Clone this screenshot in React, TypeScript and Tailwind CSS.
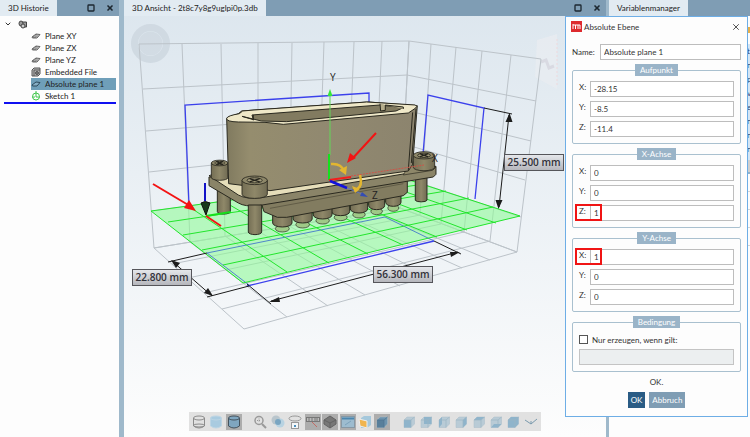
import type { ReactNode } from 'react'
import { ChevronDown, Square, X } from 'lucide-react'

type P = [number, number]

/* ---------- geometry of the 3D scene ---------- */

const wallTop: P[] = [[139, 41], [182, 41], [221, 41], [258, 40], [292, 40], [324, 39], [354, 39], [382, 38], [409, 38]]
const floorBack: P[] = [[154, 245], [190, 239], [225, 233], [258, 228], [289, 223], [318, 218], [347, 213], [374, 209], [400, 205]]
const floorFront: P[] = [[244, 326], [287, 314], [328, 303], [365, 292], [400, 283], [432, 274], [462, 265], [490, 257], [517, 249]]
const floorLeft: P[] = [[154, 245], [172, 261], [188, 275], [204, 290], [222, 306], [244, 326]]
const floorRight: P[] = [[400, 205], [420, 212], [441, 221], [464, 229], [490, 238], [517, 249]]
const sideTop: P[] = [[409, 38], [431, 41], [456, 44], [482, 48], [511, 52], [541, 56]]
const rowsLeft: P[] = [[139, 41], [143, 86], [146, 128], [149, 169], [152, 208], [154, 245]]
const rowsCorner: P[] = [[409, 38], [407, 72], [405, 107], [404, 141], [402, 174], [400, 205]]
const rowsSide: P[] = [[541, 56], [536, 98], [531, 138], [525, 177], [521, 214], [517, 249]]

const planeBack: P[] = [[151, 208], [188, 203], [223, 198], [256, 194], [288, 189], [317, 185], [346, 181], [374, 178], [400, 174]]
const planeFront: P[] = [[243, 280], [287, 269], [329, 260], [368, 251], [403, 242], [437, 234], [467, 227], [496, 220], [520, 213]]
const planeLeft: P[] = [[151, 208], [168, 219], [183, 232], [202, 247], [223, 262], [243, 280]]
const planeRight: P[] = [[400, 174], [424, 181], [446, 188], [469, 195], [493, 204], [520, 213]]

const pins: [number, number, number][] = [
  [610, 366, 46], [560, 376, 48], [507, 386, 52], [452, 394, 54], [398, 404, 56], [338, 416, 57], [277, 428, 58],
]

function Lines({ from, to }: { from: P[]; to: P[] }) {
  return (
    <>
      {from.map((a, i) => (
        <line key={i} x1={a[0]} y1={a[1]} x2={to[i][0]} y2={to[i][1]} />
      ))}
    </>
  )
}

function Screw({ x, y, w, h }: { x: number; y: number; w: number; h: number }) {
  const r = w / 2
  return (
    <g transform={`translate(${x} ${y})`} stroke="#26251d" strokeWidth="2.5">
      <path d={`M0 0V${h}A${r} ${r * 0.32} 0 0 0 ${w} ${h}V0`} fill="url(#metal)" />
      <ellipse cx={r} cy="0" rx={r} ry={r * 0.34} fill="#8d8769" />
      <ellipse cx={r} cy="0" rx={r * 0.6} ry={r * 0.2} fill="#a39c7c" />
      <path d={`M${r * 0.6} -5L${r * 1.4} 5M${r * 1.4} -5L${r * 0.6} 5`} strokeWidth="4" />
    </g>
  )
}

function DimensionLabel({ x, y, text }: { x: number; y: number; text: string }) {
  return (
    <g>
      <rect x={x + 0.5} y={y + 0.5} width="59" height="16" fill="url(#label)" stroke="#55555a" />
      <text x={x + 30} y={y + 12} textAnchor="middle" fontSize="10" fontWeight="600" fill="#303038">
        {text}
      </text>
    </g>
  )
}

function Scene() {
  return (
    <svg
      viewBox="124 16 482 390"
      className="min-h-0 w-full flex-1 font-['Open_Sans','Noto_Sans',sans-serif]"
      role="img"
      aria-label="3D Ansicht"
    >
      <defs>
        <linearGradient id="metal" x1="0" x2="1" y1="0" y2="0">
          <stop offset="0" stopColor="#746e54" />
          <stop offset="0.5" stopColor="#8f8869" />
          <stop offset="1" stopColor="#706b53" />
        </linearGradient>
        <linearGradient id="shell" x1="0" x2="1" y1="0" y2="0">
          <stop offset="0" stopColor="#807a5f" />
          <stop offset="0.12" stopColor="#958d6e" />
          <stop offset="0.5" stopColor="#918970" />
          <stop offset="1" stopColor="#8c846e" />
        </linearGradient>
        <linearGradient id="label" x1="0" x2="0" y1="0" y2="1">
          <stop offset="0" stopColor="#e6e8ec" />
          <stop offset="1" stopColor="#b4b5bb" />
        </linearGradient>
      </defs>

      {/* orientation dial and view cube */}
      <circle cx="150.500" cy="40.500" r="16" fill="none" stroke="#ccd6df" strokeWidth="7" opacity="0.8" />
      <circle cx="150.500" cy="40.500" r="12" fill="#ccd6de" opacity="0.7" />
      <path d="M537 37L557 31V86L535 74Z" fill="#e9edf1" opacity="0.7" />
      <path d="M541 59l5-2 3 8 5-2" fill="none" stroke="#d9dae2" strokeWidth="3" />
      <path d="M557 36v46" stroke="#eed9dc" strokeDasharray="2 2" />

      {/* reference grid */}
      <g stroke="#bcc3c9" fill="none" strokeWidth="1">
        <Lines from={wallTop} to={floorBack} />
        <Lines from={rowsLeft} to={rowsCorner} />
        <Lines from={rowsCorner} to={rowsSide} />
        <Lines from={sideTop} to={floorRight} />
        <Lines from={floorBack} to={floorFront} />
        <Lines from={floorLeft} to={floorRight} />
      </g>

      <path d="M189 202L185 102L369 90V100M423 151L428 92L484 105L475 196" fill="none" stroke="#3b41ec" strokeWidth="1.300" />

      {/* work plane */}
      <path d="M151 208L400 174L520 213L243 280Z" fill="#8dfb96" fillOpacity="0.58" />
      <path d="M249 282L207 250L385 214L434 238" fill="none" stroke="#4f86c9" />
      <g stroke="#22e52c" strokeWidth="1">
        <Lines from={planeBack} to={planeFront} />
        <Lines from={planeLeft} to={planeRight} />
      </g>
      <path d="M247 283L434 238" stroke="#3b41ec" strokeWidth="1.300" />

      {/* dimensions */}
      <g stroke="#1c1c1c" fill="#1c1c1c">
        <path d="M168 259L207 250M207 294L249 283M247 281L271 301M434 238L461 251M484 105L512 111" />
        <path d="M172 258L212 293M271 298L458 249M509 112L499 204" />
        <path
          stroke="none"
          d="M171 257l9 3-4 5zM213 293l-9-3 4-5zM269 299l10-5 1 5zM460 249l-10 0 1 5zM509.500 110l-4 9 7 0zM498.500 206l-3-9 7 0z"
        />
      </g>

      {/* connector */}
      <g transform="translate(190 80) scale(0.3333)" stroke="#2a291f" strokeWidth="3" strokeLinejoin="round">
        <path d="M82 310V386A19 7 0 0 0 121 386V320Z" fill="url(#metal)" />
        <path d="M676 270V352A18 6 0 0 0 711 352V270Z" fill="url(#metal)" />
        {pins.map(([x, y, w]) => (
          <g key={x}>
            <ellipse cx={x} cy={y + 9} rx={w * 0.36} ry="10" fill="#9fc987" strokeWidth="2" />
            <path
              d={`M${x - w / 2} ${y - 50}V${y - 8}A${w / 2} 12 0 0 0 ${x + w / 2} ${y - 8}V${y - 50}Z`}
              fill="url(#metal)"
            />
          </g>
        ))}
        <path d="M214 360L222 386L262 403L290 403L640 338L652 328V280Z" fill="#827c60" />
        <path d="M240 376L640 302" stroke="#504c39" strokeWidth="2" />
        <path d="M57 282V308L145 360Q165 372 205 368L730 282L738 274V250Z" fill="#8a8468" />
        <path d="M57 278L112 262L690 236L738 252L730 258L215 344Q170 350 145 336Z" fill="#e6deba" />
        <path d="M675 240L738 252L728 262L640 276L660 240Z" fill="#8e8769" strokeWidth="2" />
        <path d="M175 366V447A20 8 0 0 0 215 447V366Z" fill="url(#metal)" />
        <Screw x={64} y={240} w={50} h={44} />
        <path
          d="M110 106L145 92L155 84L535 57L682 68L668 244L655 264L420 297L240 323L165 308L116 302Z"
          fill="url(#shell)"
        />
        <path d="M110 106Q112 98 148 92L158 84L192 81L530 57L676 66Q684 70 676 76L655 90L280 124L225 118L145 117Q108 116 110 106Z" fill="#efe8c8" />
        <path d="M156 100L190 110L186 96L570 66L640 74L618 84L290 116L214 114Z" fill="#827b60" />
        <path d="M570 62L572 84L586 82V66L640 72V78" fill="#b5ad8b" />
        <path d="M190 96V112M668 88L655 262M678 78L664 240" fill="none" />
        <Screw x={156} y={292} w={76} h={42} />
        <Screw x={670} y={217} w={64} h={36} />
      </g>

      {/* axes and arrows */}
      <g fill="none">
        <path d="M330 152V92" stroke="#62d659" />
        <path d="M330 86l-2.500 7h5z" fill="#35e53b" />
        <path d="M329 177V151" stroke="#14e21c" strokeWidth="2" />
        <path d="M329 177L351 174" stroke="#f51c1c" strokeWidth="2" />
        <path d="M351 173L424 162" stroke="#cf5347" strokeDasharray="2 1" />
        <path d="M330 178L347 185" stroke="#1212dc" strokeWidth="2.500" />
        <path d="M347 185L362 191" stroke="#6075bd" />
        <path d="M368 194l-6-5-2 4z" fill="#344cb4" />
        <path d="M331 161q10-1 13 7M360 172q3 11-3 14" stroke="#e3b62f" strokeWidth="2.500" />
        <path d="M339 167l8-4-1 9zM352 183l8 3-5 4z" fill="#e3b62f" />
        <path d="M376 130L352 156M153 181L190 203" stroke="#f31313" strokeWidth="2" />
        <path d="M347 160l3-10 6 5zM196 208l-12-3 5-8z" fill="#f31313" />
        <path d="M205 180V198" stroke="#1212c8" strokeWidth="2" />
        <path d="M201 200q4-3 9 0l-4 12z" fill="#16391a" stroke="#111" />
        <path d="M206 213L231 209" stroke="#14df1c" strokeWidth="2" />
        <path d="M206 213L221 223" stroke="#f31313" strokeWidth="2" />
      </g>
      <g fontSize="10" fill="#222">
        <text x="330" y="78">Y</text>
        <text x="432" y="159">X</text>
        <text x="372" y="196">Z</text>
      </g>

      <DimensionLabel x={132} y={266} text="22.800 mm" />
      <DimensionLabel x={373} y={263} text="56.300 mm" />
      <DimensionLabel x={504} y={151} text="25.500 mm" />
    </svg>
  )
}

/* ---------- panel headers ---------- */

function PanelHeader({ title, controls }: { title: string; controls?: boolean }) {
  return (
    <header className="flex h-4 shrink-0 items-center justify-between bg-[#7f9db4]">
      <h2 className="flex h-4 items-center bg-[#e2ebf2] px-2 whitespace-nowrap">{title}</h2>
      {controls && (
        <div className="flex items-center gap-[11px] pr-[5px] text-[#1d2730]">
          <button type="button" aria-label="Maximieren">
            <Square className="size-2" strokeWidth={4} />
          </button>
          <button type="button" aria-label="Schließen">
            <X className="size-2" strokeWidth={5} />
          </button>
        </div>
      )}
    </header>
  )
}

/* ---------- history tree ---------- */

function PlaneIcon({ hollow }: { hollow?: boolean }) {
  return (
    <svg viewBox="0 0 10 8" className="h-2 w-[10px]">
      <path d="M1 5L5 2L9 2.500L6 6L1.500 6Z" fill={hollow ? '#86aec4' : '#888'} stroke={hollow ? '#2c4a5c' : '#666'} />
      {!hollow && <path d="M3 4.500L7 3M5 5.500L8 3" stroke="#ddd" strokeWidth="0.500" />}
    </svg>
  )
}

function FileIcon() {
  return (
    <svg viewBox="0 0 10 10" className="size-[10px]" fill="none" stroke="#555">
      <path d="M1 3L3 1H9V7L7 9H1Z" fill="#bbb" />
      <path d="M3 3H9M3 3V9" />
      <circle cx="6" cy="6" r="1.500" fill="#777" />
    </svg>
  )
}

function SketchIcon() {
  return (
    <svg viewBox="0 0 10 10" className="size-[10px]" fill="none" stroke="#3fc64a">
      <circle cx="5" cy="5.500" r="3.500" />
      <path d="M5 0V6H9M1 6H4" />
    </svg>
  )
}

const treeItems: { label: string; icon: ReactNode; selected?: boolean }[] = [
  { label: 'Plane XY', icon: <PlaneIcon /> },
  { label: 'Plane ZX', icon: <PlaneIcon /> },
  { label: 'Plane YZ', icon: <PlaneIcon /> },
  { label: 'Embedded File', icon: <FileIcon /> },
  { label: 'Absolute plane 1', icon: <PlaneIcon hollow />, selected: true },
  { label: 'Sketch 1', icon: <SketchIcon /> },
]

function HistoryTree() {
  return (
    <div className="pt-[2px] pr-[3px] pl-1">
      <button type="button" className="flex h-3 items-center gap-[6px]" aria-label="Baugruppe" aria-expanded="true">
        <ChevronDown className="size-2 text-[#333]" strokeWidth={3} />
        <svg viewBox="0 0 10 9" className="h-[9px] w-[10px]" fill="#999" stroke="#444">
          <path d="M4 2H8.500V7H4Z" />
          <ellipse cx="3" cy="3.500" rx="2" ry="2.500" />
          <ellipse cx="5" cy="6" rx="2" ry="2" fill="#ccc" />
        </svg>
      </button>
      <ul className="pl-[27px]">
        {treeItems.map((item) => (
          <li
            key={item.label}
            className={item.selected ? 'flex h-3 items-center gap-1 bg-[#6f9fb9]' : 'flex h-3 items-center gap-1'}
          >
            {item.icon}
            <span>{item.label}</span>
          </li>
        ))}
      </ul>
      <hr className="h-[2px] border-0 bg-[#1010f0]" />
    </div>
  )
}

/* ---------- view toolbar ---------- */

function Cylinder({ fill, stroke }: { fill: string; stroke: string }) {
  return (
    <svg viewBox="0 0 14 14" className="size-[14px]" fill={fill} stroke={stroke}>
      <path d="M1.500 3V11Q7 15 12.500 11V3" />
      <ellipse cx="7" cy="3" rx="5.500" ry="2" />
      {fill === 'none' && <ellipse cx="7" cy="10.500" rx="5.500" ry="1.500" />}
    </svg>
  )
}

function Cube({ face, dark }: { face: string; dark?: boolean }) {
  return (
    <svg viewBox="0 0 12 12" className="size-3">
      <path d="M1 4L4 1H11.500V8L8 11.500H1Z" fill={dark ? '#6c93ae' : '#b9cbd6'} stroke="#a9bcc8" strokeWidth="0.500" />
      <path d={face} fill={dark ? '#587f9b' : '#8fb4cb'} />
      <path d="M1 4H8L11.500 1M8 4V11.500" fill="none" stroke={dark ? '#4d748f' : '#9cb4c3'} strokeWidth="0.700" />
    </svg>
  )
}

const tools: { name: string; icon: ReactNode; active?: boolean; gap?: boolean }[] = [
  { name: 'Drahtmodell', icon: <Cylinder fill="none" stroke="#8b8b8b" /> },
  { name: 'Schattiert', icon: <Cylinder fill="#a9cbe0" stroke="#bdd5e4" /> },
  { name: 'Schattiert mit Kanten', icon: <Cylinder fill="#7fa6c0" stroke="#45535e" />, active: true },
  {
    name: 'Zoom',
    gap: true,
    icon: (
      <svg viewBox="0 0 14 14" className="size-[14px]" fill="none" stroke="#999">
        <circle cx="6" cy="5.500" r="4" strokeWidth="1.500" />
        <path d="M4 5.500H8M6 3.500V7.500" strokeDasharray="1 1" />
        <path d="M9 9L13 13" strokeWidth="2" />
      </svg>
    ),
  },
  {
    name: 'Transparenz',
    icon: (
      <svg viewBox="0 0 14 14" className="size-[14px]">
        <circle cx="5" cy="5" r="4.500" fill="#b9c5cc" />
        <circle cx="9" cy="8" r="4.500" fill="#b8d3e2" />
        <circle cx="7" cy="7" r="3" fill="#7aa5c1" />
      </svg>
    ),
  },
  {
    name: 'Drehen',
    icon: (
      <svg viewBox="0 0 14 14" className="size-[14px]" fill="none" stroke="#999">
        <ellipse cx="7" cy="3.500" rx="6" ry="2.500" />
        <rect x="3.500" y="7.500" width="7" height="6" fill="#f4f7f9" />
        <path d="M6 10H8V12H6Z" fill="#4c8fbc" stroke="none" />
      </svg>
    ),
  },
  {
    name: 'Bemaßung',
    active: true,
    icon: (
      <svg viewBox="0 0 14 14" className="size-[14px]" fill="none" stroke="#777">
        <rect x="0.500" y="2.500" width="13" height="4" fill="#bbb" />
        <path d="M3 3V6M6 3V6M9 3V6M11 3V6" />
        <path d="M6 7L11 12" stroke="#c26b64" />
      </svg>
    ),
  },
  {
    name: 'Raster',
    active: true,
    icon: (
      <svg viewBox="0 0 14 14" className="size-[14px]" fill="#777" stroke="#626262">
        <path d="M1 5L7 1L13 5V9L7 13L1 9Z" />
        <path d="M1 5L7 8L13 5M7 8V13" fill="none" />
      </svg>
    ),
  },
  {
    name: 'Fenster',
    active: true,
    icon: (
      <svg viewBox="0 0 14 14" className="size-[14px]">
        <rect x="0.500" y="1.500" width="13" height="11" fill="#9dbccf" stroke="#8798a4" />
        <path d="M1 3.500H13" stroke="#4b86ae" strokeWidth="2" />
        <path d="M4 10L10 6" stroke="#7ca2bb" />
      </svg>
    ),
  },
  {
    name: 'Schnitt',
    icon: (
      <svg viewBox="0 0 14 14" className="size-[14px]">
        <path d="M3 3L6 1H13V10L9 13H3Z" fill="#a5c8dc" />
        <path d="M1 4L9 6V13L2 11Z" fill="#f0b550" stroke="#eee" />
      </svg>
    ),
  },
  { name: 'Perspektive', icon: <Cube face="M1 4H8V11.500H1Z" dark />, active: true },
  { name: 'Vorne', icon: <Cube face="M1 4H8V11.500H1Z" />, gap: true },
  { name: 'Hinten', icon: <Cube face="M4 1H11.500V8H4Z" /> },
  { name: 'Links', icon: <Cube face="M1 4L4 1V8L1 11.500Z" /> },
  { name: 'Rechts', icon: <Cube face="M8 4L11.500 1V8L8 11.500Z" /> },
  { name: 'Oben', icon: <Cube face="M1 4L4 1H11.500L8 4Z" /> },
  { name: 'Unten', icon: <Cube face="M1 11.500L4 8H11.500L8 11.500Z" /> },
  { name: 'Isometrisch', icon: <Cube face="M1 4L4 1H11.500V8L8 11.500H1Z" /> },
  {
    name: 'Weitere',
    icon: (
      <svg viewBox="0 0 14 14" className="size-[14px]" fill="none" stroke="#7a9aad">
        <path d="M1 5L7 9L13 4M7 9V6" />
      </svg>
    ),
  },
]

function Toolbar() {
  return (
    <div
      role="toolbar"
      aria-label="Ansicht"
      className="mb-[6px] flex h-[19px] w-[352px] items-center justify-between self-center bg-[#e1e1e1] px-[2px]"
    >
      {tools.map((tool) => (
        <div key={tool.name} className={tool.gap ? 'pl-[9px]' : ''}>
          <button
            type="button"
            aria-label={tool.name}
            className={
              tool.active
                ? 'flex size-4 items-center justify-center bg-[#adadad]'
                : 'flex size-4 items-center justify-center'
            }
          >
            {tool.icon}
          </button>
        </div>
      ))}
    </div>
  )
}

/* ---------- variable manager ---------- */

const variables = ['t', 'n', 'p', 'v', 'e', 'n', 'n', 'n']

function VariableManager() {
  return (
    <div className="flex w-[3px] flex-col self-end overflow-hidden pt-[11px]">
      <span className="h-[6px] bg-[#e8b04a]" />
      <ul className="mt-[11px] bg-[#d3e5f5] pb-1 text-[#27406b]">
        {variables.map((name, i) => (
          <li key={i} className="h-[14px] leading-[14px]">
            {name}
          </li>
        ))}
      </ul>
      <span className="h-[14px] border-b-2 border-[#8fb2cb] bg-[#cfcfcf]" />
      {[0, 1, 2, 3].map((row) => (
        <span key={row} className="h-[18px] border-b border-[#d5d5d5]" />
      ))}
    </div>
  )
}

/* ---------- dialog ---------- */

function Group({ title, children }: { title: string; children: ReactNode }) {
  return (
    <fieldset className="rounded-xs border border-[#a9c0cf] px-[6px] pt-[5px] pb-[6px]">
      <legend className="mx-auto h-3 bg-[#9ab4c8] px-[5px] leading-3 text-white">{title}</legend>
      {children}
    </fieldset>
  )
}

function Vector({ id, title, values, marked }: { id: string; title: string; values: string[]; marked?: number }) {
  return (
    <Group title={title}>
      <div className="flex flex-col gap-1">
        {['X:', 'Y:', 'Z:'].map((axis, i) => (
          <div key={axis} className="relative flex h-4">
            <label htmlFor={id + i} className="w-[11px] leading-[13px]">
              {axis}
            </label>
            <input id={id + i} defaultValue={values[i]} className="min-w-0 flex-1 border border-[#bdbdbd] bg-white px-[3px]" />
            {marked === i && <span className="absolute -top-px -left-1 h-[17px] w-[27px] border-2 border-[#f01414]" />}
          </div>
        ))}
      </div>
    </Group>
  )
}

function PlaneDialog() {
  return (
    <form
      role="dialog"
      aria-label="Absolute Ebene"
      className="absolute top-4 right-[2px] w-[183px] border border-[#6eaee6] bg-[#fdfdfd] px-[6px] pb-2 text-[#333]"
    >
      <div className="flex h-[19px] items-center gap-[2px]">
        <svg viewBox="0 0 11 11" className="-ml-px size-[11px]">
          <rect width="11" height="11" fill="#dd2a2e" />
          <path d="M2 8V3M2 4H9V8M4.500 4V8M7 4V8" stroke="#fff" fill="none" />
        </svg>
        <h3 className="flex-1">Absolute Ebene</h3>
        <button type="button" aria-label="Schließen">
          <X className="size-[10px]" strokeWidth={2} />
        </button>
      </div>
      <div className="mt-2 flex h-4 items-center">
        <label htmlFor="plane-name" className="w-7">
          Name:
        </label>
        <input
          id="plane-name"
          defaultValue="Absolute plane 1"
          className="h-4 min-w-0 flex-1 border border-[#bdbdbd] bg-white px-[3px]"
        />
      </div>
      <div className="mt-1 flex flex-col gap-1">
        <Vector id="origin" title="Aufpunkt" values={['-28.15', '-8.5', '-11.4']} />
        <Vector id="x-axis" title="X-Achse" values={['0', '0', '1']} marked={2} />
        <Vector id="y-axis" title="Y-Achse" values={['1', '0', '0']} marked={0} />
        <Group title="Bedingung">
          <label className="flex h-[13px] items-center gap-1">
            <input type="checkbox" className="size-[9px] appearance-none border border-[#555] bg-white" />
            Nur erzeugen, wenn gilt:
          </label>
          <input
            disabled
            aria-label="Bedingung"
            className="mt-[3px] block h-4 w-full border border-[#c4c4c4] bg-[#eceff0]"
          />
        </Group>
      </div>
      <output className="mt-1 block text-center leading-3">OK.</output>
      <div className="mt-1 flex justify-center gap-1 text-white">
        <button type="submit" className="h-4 bg-[#2a5c85] px-[3px]">
          OK
        </button>
        <button type="button" className="h-4 bg-[#7f9db4] px-[3px]">
          Abbruch
        </button>
      </div>
    </form>
  )
}

export default function App() {
  return (
    <main className="relative flex h-screen overflow-hidden bg-[#9fb9cb] font-[Lato,'Open_Sans',sans-serif] text-[8px] leading-3 text-[#222]">
      <section className="flex w-[119px] shrink-0 flex-col bg-[#fdfdfd]">
        <PanelHeader title="3D Historie" controls />
        <HistoryTree />
      </section>
      <section className="ml-[5px] flex min-w-0 flex-1 flex-col bg-linear-to-b from-[#dce6ee] to-[#fdfdfd]">
        <PanelHeader title="3D Ansicht - 2t8c7y8g9uglpi0p.3db" controls />
        <Scene />
        <Toolbar />
      </section>
      <section className="ml-[3px] flex w-[141px] shrink-0 flex-col bg-[#fdfdfd]">
        <PanelHeader title="Variablenmanager" />
        <VariableManager />
      </section>
      <PlaneDialog />
    </main>
  )
}
